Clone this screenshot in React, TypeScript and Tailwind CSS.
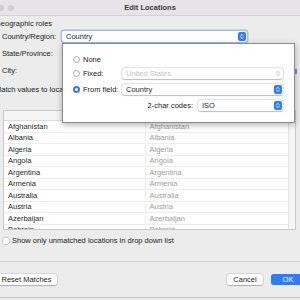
import React from 'react';

const countries = [
  'Afghanistan',
  'Albania',
  'Algeria',
  'Angola',
  'Argentina',
  'Armenia',
  'Australia',
  'Austria',
  'Azerbaijan',
  'Bahrain',
];

const Stepper: React.FC<{ disabled?: boolean }> = ({ disabled }) => (
  <div
    className={`w-[8px] h-[9px] rounded-[2px] flex items-center justify-center ${
      disabled ? '' : 'bg-[#2f7cf6]'
    }`}
  >
    <svg width="8" height="9" viewBox="0 0 8 9">
      <path
        d="M2.6 3.7 L4 2.3 L5.4 3.7 M2.6 5.3 L4 6.7 L5.4 5.3"
        fill="none"
        stroke={disabled ? '#b9b9b9' : '#ffffff'}
        strokeWidth="0.9"
        strokeLinecap="round"
        strokeLinejoin="round"
      />
    </svg>
  </div>
);

const Select: React.FC<{ value: string; width: string; disabled?: boolean; focused?: boolean }> = ({
  value,
  width,
  disabled,
  focused,
}) => (
  <div
    className={`${width} h-[11px] rounded-[2.5px] bg-white flex items-center justify-between pl-[4px] pr-[1px] ${
      focused
        ? 'shadow-[0_0_0_1.5px_#9dbdf0]'
        : 'shadow-[0_0_0_0.5px_rgba(0,0,0,0.18),0_0.5px_1px_rgba(0,0,0,0.18)]'
    }`}
  >
    <span className={disabled ? 'text-[#c4c4c4]' : 'text-[#1f1f1f]'}>{value}</span>
    <Stepper disabled={disabled} />
  </div>
);

const Radio: React.FC<{ checked?: boolean }> = ({ checked }) =>
  checked ? (
    <div className="w-[7px] h-[7px] rounded-full bg-[#2f7cf6] flex items-center justify-center">
      <div className="w-[2.5px] h-[2.5px] rounded-full bg-white" />
    </div>
  ) : (
    <div className="w-[7px] h-[7px] rounded-full bg-white border-[0.5px] border-[#aaaaaa]" />
  );

const Button: React.FC<{ label: string; className: string; primary?: boolean }> = ({ label, className, primary }) => (
  <div
    className={`h-[11px] rounded-[2.5px] flex items-center justify-center ${className} ${
      primary
        ? 'bg-[#2f7cf6] text-white'
        : 'bg-white text-[#1f1f1f] shadow-[0_0_0_0.5px_rgba(0,0,0,0.15),0_0.5px_1px_rgba(0,0,0,0.2)]'
    }`}
  >
    {label}
  </div>
);

export default function App() {
  return (
    <div
      className="w-[300px] h-[300px] overflow-hidden bg-[#ececec] relative flex flex-col text-[7.5px] leading-none text-[#222222]"
      style={{ fontFamily: '"Liberation Sans", Arial, sans-serif' }}
    >
      {/* title bar */}
      <div className="h-[16px] shrink-0 bg-[#e6e4e6] border-b border-[#d3d1d3] grid grid-cols-[1fr_auto_1fr] items-center">
        <div className="flex items-center gap-[4px] -ml-[2px]">
          <div className="w-[6px] h-[6px] rounded-full bg-[#cfcdcf]" />
          <div className="w-[6px] h-[6px] rounded-full bg-[#cfcdcf]" />
        </div>
        <div className="font-bold text-[7.5px] text-[#3a3a3a]">Edit Locations</div>
        <div />
      </div>

      {/* body */}
      <div className="flex flex-col">
        <div className="h-[15px] flex items-center -ml-[5px]">Geographic roles</div>

        <div className="h-[11px] flex items-center">
          <div className="w-[62px] pl-[2px]">Country/Region:</div>
          <Select value="Country" width="w-[185px]" focused />
        </div>

        <div className="h-[11px] mt-[6.5px] flex items-center pl-[2px]">State/Province:</div>

        <div className="h-[11px] mt-[6px] flex items-center pl-[2px]">
          <span>City:</span>
          <div className="ml-auto mr-[3px] w-[3px] h-[5px] bg-[#8a7ff0]" />
        </div>

        <div className="h-[11px] mt-[8px] flex items-center -ml-[5px]">Match values to location:</div>

        {/* table */}
        <div className="mt-[14.5px] ml-[3px] w-[293px] h-[120px] border border-[#c9c9c9] bg-white flex overflow-hidden">
          <div className="flex-1 flex flex-col">
            <div className="h-[10px] shrink-0 bg-[#f5f5f5] border-b border-[#dcdcdc]" />
            {countries.map((c) => (
              <div key={c} className="h-[11.5px] shrink-0 grid grid-cols-[142px_1fr] border-b border-[#ededed]">
                <div className="pl-[4px] flex items-center border-r border-[#ededed] text-[#1f1f1f]">{c}</div>
                <div className="pl-[3.5px] flex items-center text-[#9d9d9d]">{c}</div>
              </div>
            ))}
          </div>
          <div className="w-[7px] bg-[#f6f6f6] border-l border-[#e2e2e2]" />
        </div>

        <div className="h-[11px] mt-[5px] flex items-center gap-[3px] pl-[3px]">
          <div className="w-[6px] h-[6px] rounded-[1.5px] bg-white shadow-[0_0_0_0.5px_rgba(0,0,0,0.3)]" />
          <span>Show only unmatched locations in drop down list</span>
        </div>

        <div className="mt-[15px] h-px bg-[#d2d2d2]" />

        <div className="mt-[12px] flex items-center justify-between">
          <Button label="Reset Matches" className="-ml-[4px] w-[61px]" />
          <div className="flex items-center gap-[8px] -mr-[5px]">
            <Button label="Cancel" className="w-[36px]" />
            <Button label="OK" className="w-[34px]" primary />
          </div>
        </div>

        <div className="mt-[12px] h-px bg-[#c8c8c8]" />
      </div>

      {/* popover */}
      <div className="absolute left-[62px] top-[43px] w-[233px] h-[80px] bg-white border border-[#8c8c8c] shadow-[0_2px_6px_rgba(0,0,0,0.3)] z-10 flex flex-col pt-[10px] pl-[10px]">
        <div className="h-[11px] flex items-center gap-[3px]">
          <Radio />
          <span>None</span>
        </div>
        <div className="h-[11px] mt-[3px] flex items-center">
          <Radio />
          <span className="ml-[3px] w-[39px]">Fixed:</span>
          <Select value="United States" width="w-[161px]" disabled />
        </div>
        <div className="h-[11px] mt-[5px] flex items-center">
          <Radio checked />
          <span className="ml-[3px] w-[39px]">From field:</span>
          <Select value="Country" width="w-[161px]" />
        </div>
        <div className="h-[11px] mt-[5px] flex items-center">
          <span className="w-[120px] text-right">2-char codes:</span>
          <div className="ml-[5px]">
            <Select value="ISO" width="w-[85px]" />
          </div>
        </div>
      </div>
    </div>
  );
}
